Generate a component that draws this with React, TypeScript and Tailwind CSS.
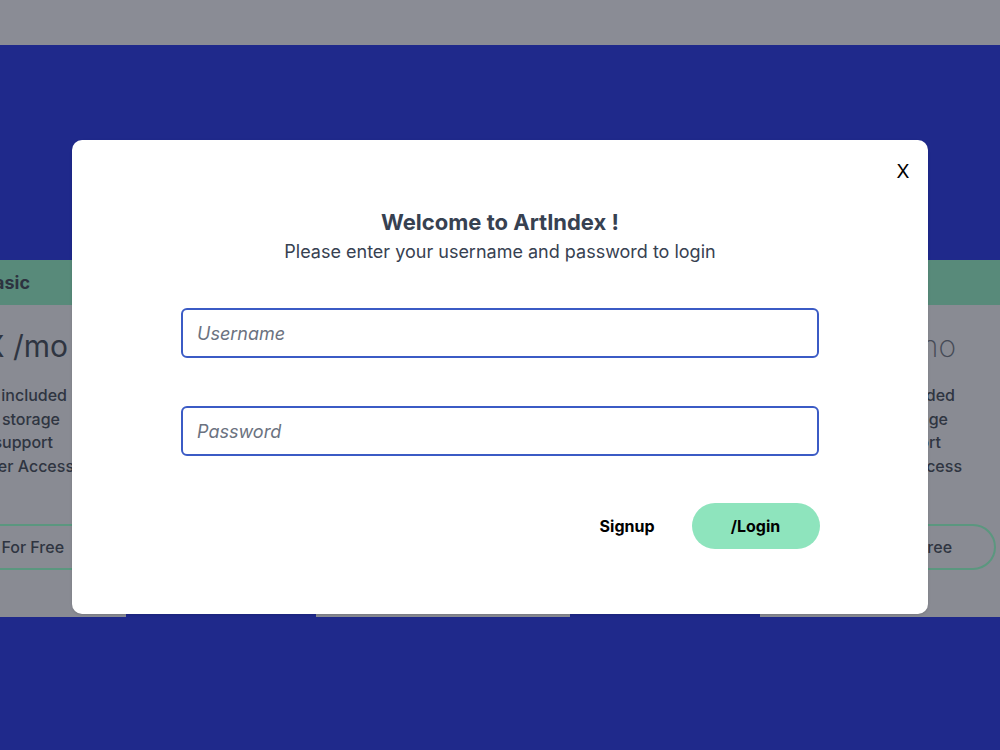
import React from "react";

type PlanProps = {
  name: string;
  price: string;
  thin?: boolean;
};

function PlanCard({ name, price, thin }: PlanProps) {
  return (
    <div className="flex h-[357px] w-[254px] shrink-0 flex-col">
      <div className="flex h-[45px] items-center justify-end bg-[#588a7a] pr-[96px] text-lg font-bold text-[#2d3340]">
        {name}
      </div>
      <div className="flex flex-1 flex-col bg-[#898b93] text-[#2f3541]">
        <div
          className={
            thin
              ? "mt-[21px] pr-[58px] text-right text-[30px] leading-[40px] font-extralight text-[#454a56]"
              : "mt-[21px] pr-[58px] text-right text-[30px] leading-[40px] font-normal"
          }
        >
          {price}
        </div>
        <ul className="mt-[18px] flex flex-col text-base font-medium leading-[23.5px]">
          <li className="pr-[59px] text-right">10 images included</li>
          <li className="pr-[66px] text-right">1 GB storage</li>
          <li className="pr-[73px] text-right">Email support</li>
          <li className="pr-[52px] text-right">Member Access</li>
        </ul>
        <div className="mt-[46px] flex justify-end pr-[18px]">
          <div className="flex h-[46px] w-[180px] items-center justify-center rounded-full border-2 border-[#5b977f] text-base font-medium">
            Try For Free
          </div>
        </div>
      </div>
    </div>
  );
}

export default function App() {
  return (
    <div className="relative h-[750px] w-[1000px] overflow-hidden font-['Inter','Noto_Sans',sans-serif]">
      <div className="flex h-full flex-col">
        <div className="h-[45px] bg-[#8a8c95]" />
        <div className="flex-1 bg-[#1f298b] pt-[215px]">
          <div className="-ml-[128px] flex gap-[190px]">
            <PlanCard name="Basic" price="$X /mo" />
            <PlanCard name="Standard" price="$Y /mo" />
            <PlanCard name="Premium" price="$Z /mo" thin />
          </div>
        </div>
      </div>

      <div className="absolute left-[72px] top-[140px] flex h-[474px] w-[856px] flex-col rounded-[10px] bg-white shadow-sm">
        <div className="flex justify-end pr-[10px] pt-[20px]">
          <button className="h-[24px] w-[30px] text-[19px] leading-[24px] text-black">X</button>
        </div>
        <h2 className="mt-[23px] text-center text-[22px] font-bold leading-[30px] text-[#374151]">
          Welcome to ArtIndex !
        </h2>
        <p className="mt-[1px] text-center text-lg leading-[28px] text-[#374151]">
          Please enter your username and password to login
        </p>
        <div className="mx-auto mt-[42px] flex w-[638px] flex-col gap-[48px]">
          <input
            type="text"
            placeholder="Username"
            className="h-[50px] w-full rounded-[6px] border-2 border-[#3b5bc5] px-[14px] text-lg italic text-[#374151] outline-none placeholder:italic placeholder:text-[#6b7280]"
          />
          <input
            type="password"
            placeholder="Password"
            className="h-[50px] w-full rounded-[6px] border-2 border-[#3b5bc5] px-[14px] text-lg italic text-[#374151] outline-none placeholder:italic placeholder:text-[#6b7280]"
          />
        </div>
        <div className="mx-auto mt-[47px] flex w-[639px] items-center justify-end gap-[37px]">
          <button className="text-base font-bold text-black">Signup</button>
          <button className="h-[46px] w-[128px] rounded-full bg-[#8ee4bd] text-base font-bold text-black">
            /Login
          </button>
        </div>
      </div>
    </div>
  );
}
